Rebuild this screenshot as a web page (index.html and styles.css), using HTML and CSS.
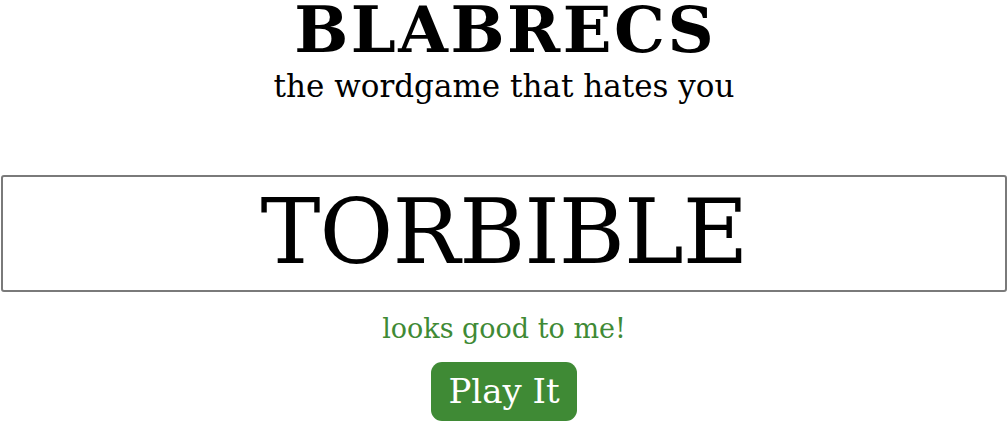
FILE: index.html
```html
<!DOCTYPE html>
<html>
<head>
<meta charset="utf-8">
<link rel="stylesheet" href="styles.css">
</head>
<body>
<main class="game">
  <header class="masthead">
    <h1 class="title">BLABRECS</h1>
    <p class="tagline">the wordgame that hates you</p>
  </header>
  <div class="entry">
    <input class="word" type="text" value="TORBIBLE">
  </div>
  <p class="verdict">looks good to me!</p>
  <button class="play">Play It</button>
</main>
</body>
</html>
```
FILE: styles.css
```css
html, body {
  margin: 0;
  padding: 0;
  background: #fff;
}
.game {
  display: flex;
  flex-direction: column;
  align-items: center;
  font-family: "DejaVu Serif", "Liberation Serif", serif;
  color: #000;
}
.masthead {
  display: flex;
  flex-direction: column;
  align-items: center;
}
.title {
  margin: 0;
  font-size: 64px;
  line-height: 60px;
  font-weight: bold;
  letter-spacing: 2.5px;
  padding-left: 2.5px;
}
.tagline {
  margin: 8px 0 0;
  font-size: 31px;
  line-height: 36px;
}
.entry {
  box-sizing: border-box;
  width: 100%;
  padding: 0 1px;
  margin-top: 71px;
}
.word {
  box-sizing: border-box;
  display: block;
  width: 100%;
  height: 117px;
  border: 2px solid #7a7a7a;
  border-radius: 3px;
  text-align: center;
  font-family: "DejaVu Serif", "Liberation Serif", serif;
  font-size: 90px;
  letter-spacing: -1px;
  color: #000;
  padding: 0 0 4px;
  background: #fff;
  outline: none;
}
.verdict {
  margin: 17px 0 0;
  font-size: 27px;
  line-height: 40px;
  color: #3f8a35;
}
.play {
  margin-top: 13px;
  font-family: "DejaVu Serif", "Liberation Serif", serif;
  font-size: 34px;
  line-height: 40px;
  padding: 9px 17px 10px;
  color: #fff;
  background: #3f8a35;
  border: none;
  border-radius: 11px;
}
```
